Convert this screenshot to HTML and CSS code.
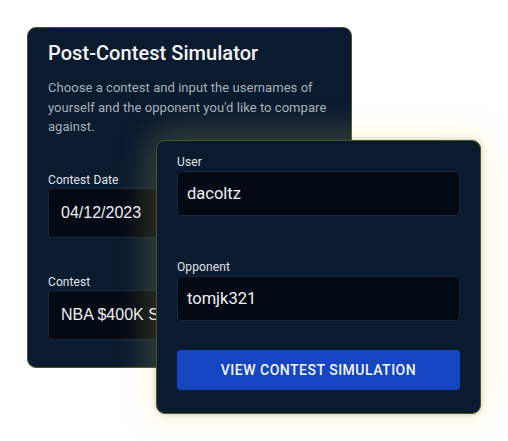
FILE: index.html
```html
<!DOCTYPE html>
<html lang="en">
<head>
<meta charset="utf-8">
<title>Post-Contest Simulator</title>
<link rel="stylesheet" href="styles.css">
</head>
<body>
<div class="stage">
  <section class="card card-main">
    <h1 class="title">Post-Contest Simulator</h1>
    <p class="desc">Choose a contest and input the usernames of yourself and the opponent you'd like to compare against.</p>
    <div class="field field-date">
      <label class="label">Contest Date</label>
      <div class="input input-lg input-arial">04/12/2023</div>
    </div>
    <div class="field field-contest">
      <label class="label">Contest</label>
      <div class="input input-lg input-arial">NBA $400K Sharpshooter</div>
    </div>
  </section>
  <section class="card card-float">
    <div class="field">
      <label class="label">User</label>
      <div class="input input-md">dacoltz</div>
    </div>
    <div class="field field-opp">
      <label class="label">Opponent</label>
      <div class="input input-md">tomjk321</div>
    </div>
    <button class="btn">VIEW CONTEST SIMULATION</button>
  </section>
</div>
</body>
</html>
```

FILE: styles.css
```css
* { box-sizing: border-box; }
html, body { margin: 0; padding: 0; background: #ffffff; }
body { font-family: Roboto, "Noto Sans", Arial, sans-serif; width: 508px; height: 441px; overflow: hidden; }

.stage { position: relative; padding: 27px 0 0 27px; }

.card {
  background: #0a1a2f;
  border: 1px solid #4a5424;
  border-radius: 9px;
  width: 325px;
}

.card-main {
  height: 341px;
  padding: 13px 20px 0 20px;
  overflow: hidden;
}

.title {
  margin: 0;
  font-size: 20px;
  line-height: 24px;
  font-weight: 500;
  color: #f3f5f7;
  letter-spacing: 0.05px;
}

.desc {
  margin: 13px 0 0 0;
  font-size: 13px;
  line-height: 19.5px;
  color: #a7afba;
  letter-spacing: 0.05px;
}

.field { display: flex; flex-direction: column; }
.field-date { margin-top: 35px; }
.field-contest { margin-top: 36px; }

.label {
  font-size: 12px;
  line-height: 16px;
  color: #e1e4e9;
  letter-spacing: 0.1px;
}

.input {
  background: #030a14;
  border: 1px solid #1b2738;
  border-radius: 4px;
  color: #eef0f3;
  white-space: nowrap;
  overflow: hidden;
  display: flex;
  align-items: center;
}
.input-lg { height: 50px; width: 300px; padding-left: 12px; font-size: 16px; }
.input-arial { font-family: "Liberation Sans", Arial, sans-serif; }
.input-md { height: 45px; padding-left: 9px; font-size: 16.5px; margin-top: 1px; }

.card-float {
  position: absolute;
  left: 156px;
  top: 140px;
  height: 274px;
  padding: 13px 20px 0 20px;
  display: flex;
  flex-direction: column;
  box-shadow: 0 0 6px rgba(10, 10, 0, 0.22), 0 0 36px 6px rgba(245, 232, 110, 0.24);
}

.field-opp { margin-top: 43px; }

.btn {
  margin-top: 29px;
  height: 40px;
  width: 100%;
  border: none;
  border-radius: 4px;
  background: #1545c0;
  color: #f4f6fb;
  font-family: Roboto, "Noto Sans", Arial, sans-serif;
  font-size: 14px;
  font-weight: 500;
  letter-spacing: 0.5px;
  padding: 0;
}
```
